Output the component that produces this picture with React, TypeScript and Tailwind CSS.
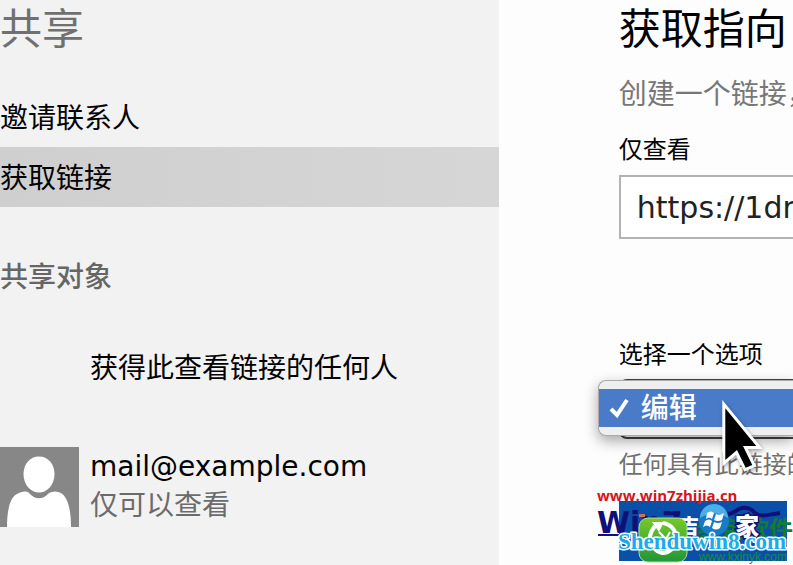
import { useState } from 'react';

const cjk = "font-['Noto_Sans_CJK_SC',sans-serif]";
const latin = "font-['DejaVu_Sans','Noto_Sans_CJK_SC',sans-serif]";

function Avatar() {
  return (
    <svg className="h-20 w-[79px] shrink-0" viewBox="0 0 79 80" role="img" aria-label="mail@example.com">
      <rect width="79" height="80" fill="#878787" />
      <path d="M7 80C7 66 9 49 19 46C24 44 27 44 29 46C35 53 43 53 49 46C53 44 57 44 61 46C69 51 71 66 71 80Z" fill="#fff" />
      <path d="M39 9.500C48 9.500 54.500 17 54.500 27C54.500 38 47 45.500 39 45.500C31 45.500 23.500 38 23.500 27C23.500 17 30 9.500 39 9.500Z" fill="#fff" stroke="#878787" strokeWidth="6" paintOrder="stroke" />
    </svg>
  );
}

function Pointer() {
  return (
    <svg className="absolute top-[14px] left-[116px] h-20 w-14 drop-shadow-[1px_2px_2px_rgba(0,0,0,0.35)]" viewBox="0 0 56 80" aria-hidden="true">
      <path d="M10.300 13.300V65L22 55L30.700 72.700L37.300 70L28 51H41.300Z" fill="#000" stroke="#fff" strokeWidth="6" paintOrder="stroke" />
    </svg>
  );
}

function SiteMarks() {
  return (
    <svg className="pointer-events-none absolute right-0 bottom-0 h-[85px] w-[200px]" viewBox="0 0 200 85">
      <rect x="26" y="21" width="168" height="60" fill="#0b50a8" />
      <text x="4" y="21" fontFamily="Open Sans, sans-serif" fontSize="15" fontWeight="700" fill="#d5141b">www.win7zhijia.cn</text>
      <text x="4" y="53" fontFamily="DejaVu Sans, sans-serif" fontSize="30" fontWeight="700" fill="#101078">Win7</text>
      <rect x="5" y="54" width="45" height="2" fill="#101078" />
      <rect x="46" y="34" width="6" height="3" fill="#d76a58" />
      <path d="M128 32C136 36 140 33 146 29C153 26 159 29 162 33C168 38 178 34 187 33" fill="none" stroke="#101078" strokeWidth="4" />
      <path d="M146 37q6 2 10-2" fill="none" stroke="#101078" strokeWidth="3" />
      <text x="86" y="54" fontFamily="Noto Sans CJK SC, sans-serif" fontSize="20" fontWeight="900" fill="#fff">吉</text>
      <text x="104" y="58" fontFamily="Noto Sans CJK SC, sans-serif" fontSize="24" fontWeight="700" fill="#127b35">绿色软件</text>
      <text x="142" y="55" fontFamily="Noto Sans CJK SC, sans-serif" fontSize="24" fontWeight="900" fill="#fff" stroke="#101078" strokeWidth="3" paintOrder="stroke">家</text>
      <circle cx="121" cy="41" r="15" fill="#177bc5" />
      <path d="M107 38A14 14 0 0 1 135 38Q122 29 107 38Z" fill="#49afe5" />
      <path d="M114 33Q118 30 121 33L119 39Q116 36 113 39ZM123 34Q127 36 131 33L129 40Q125 42 121 40ZM112 41Q116 38 119 41L117 47Q114 44 110 47ZM121 42Q125 44 129 42L127 48Q123 51 119 48Z" fill="#fff" />
      <defs>
        <linearGradient id="badge" x1="0" y1="0" x2="0" y2="1">
          <stop stopColor="#75ca28" />
          <stop offset="1" stopColor="#219538" />
        </linearGradient>
      </defs>
      <rect x="46" y="38" width="48" height="44" rx="9" fill="url(#badge)" stroke="#b0dd9b" strokeWidth="1" />
      <path d="M62 46Q53 57 60 67Q69 78 79 69Q87 60 81 50Q77 44 70 43" fill="none" stroke="#fff" strokeWidth="4" />
      <path d="M59 42L71 42L66 52Z" fill="#fff" />
      <path d="M66 52L73 59L77 52" fill="none" stroke="#fff" strokeWidth="2" />
      <text x="106" y="81" fontFamily="Liberation Sans, sans-serif" fontSize="12" fill="#178d45">www.kxinyk.com</text>
      <text x="25" y="69" fontFamily="Liberation Serif, serif" fontSize="23" fontWeight="700" fill="#1cabea" stroke="#fff" strokeWidth="3" strokeLinejoin="round" paintOrder="stroke">Shenduwin8.com</text>
    </svg>
  );
}

export default function App() {
  const [tab, setTab] = useState('link');
  const navItem = 'flex h-[60px] w-full items-center pb-0.5 text-left text-[28px] ';
  const active = 'bg-linear-to-r from-[#cfcfcf] to-[#d6d6d6]';

  return (
    <div className={`relative flex min-h-screen overflow-hidden bg-[#fdfdfd] whitespace-nowrap text-black ${cjk}`}>
      <aside className="w-[62.9%] shrink-0 bg-[#f2f2f2]">
        <h1 className="text-[42px] leading-[52px] text-[#707070]">共享</h1>
        <nav className="mt-[35px]">
          <button type="button" onClick={() => setTab('invite')} className={navItem + (tab === 'invite' ? active : '')}>邀请联系人</button>
          <button type="button" onClick={() => setTab('link')} className={navItem + (tab === 'link' ? active : '')}>获取链接</button>
        </nav>
        <h2 className="mt-12 text-[28px] leading-10 font-medium text-[#666]">共享对象</h2>
        <ul className="mt-8 flex flex-col gap-10">
          <li className="flex h-20 items-center pb-0.5 pl-[90px] text-[28px]">获得此查看链接的任何人</li>
          <li className="flex h-20 gap-[11px]">
            <Avatar />
            <div>
              <p className={`text-[28px] leading-10 ${latin}`}>mail@example.com</p>
              <p className="text-[28px] leading-8 text-[#6b6b6b]">仅可以查看</p>
            </div>
          </li>
        </ul>
      </aside>

      <main className="min-w-0 flex-1 pl-[120px]">
        <h1 className="text-[42px] leading-[52px]">获取指向</h1>
        <p className="mt-5 text-[28px] leading-10 text-[#777]">创建一个链接，</p>
        <label htmlFor="link" className="mt-5 block text-2xl leading-8">仅查看</label>
        <input
          id="link"
          readOnly
          value="https://1dr"
          className={`mt-[11px] block h-16 w-full border-2 border-r-0 border-[#b2b2b2] bg-white pl-4 text-[30px] text-[#222] ${latin}`}
        />
        <label htmlFor="option" className="mt-[98px] block text-2xl leading-8">选择一个选项</label>
        <div className="relative mt-[10px]">
          <select id="option" className="block h-[60px] w-full appearance-none rounded-l-lg border-2 border-r-0 border-[#444] bg-white pl-5 text-[28px]">
            <option>编辑</option>
          </select>
          <div className="absolute top-px right-0 -left-[21px] rounded-l-lg border border-r-0 border-[#aaa] bg-[#efefef] py-2 shadow-[0_5px_14px_rgba(0,0,0,0.35)]">
            <button type="button" className="flex h-[38px] w-full items-center bg-[#4a7bc9] pb-1 pl-2.5 text-[28px] font-medium text-white">
              <svg className="mt-1 mr-3 size-5" viewBox="0 0 20 20" aria-hidden="true">
                <path d="M2 11L8 17L18 2" fill="none" stroke="#fff" strokeWidth="4" />
              </svg>
              编辑
            </button>
            <Pointer />
          </div>
        </div>
        <p className="mt-2 text-2xl leading-8 text-[#707070]">任何具有此链接的</p>
      </main>
      <SiteMarks />
    </div>
  );
}
